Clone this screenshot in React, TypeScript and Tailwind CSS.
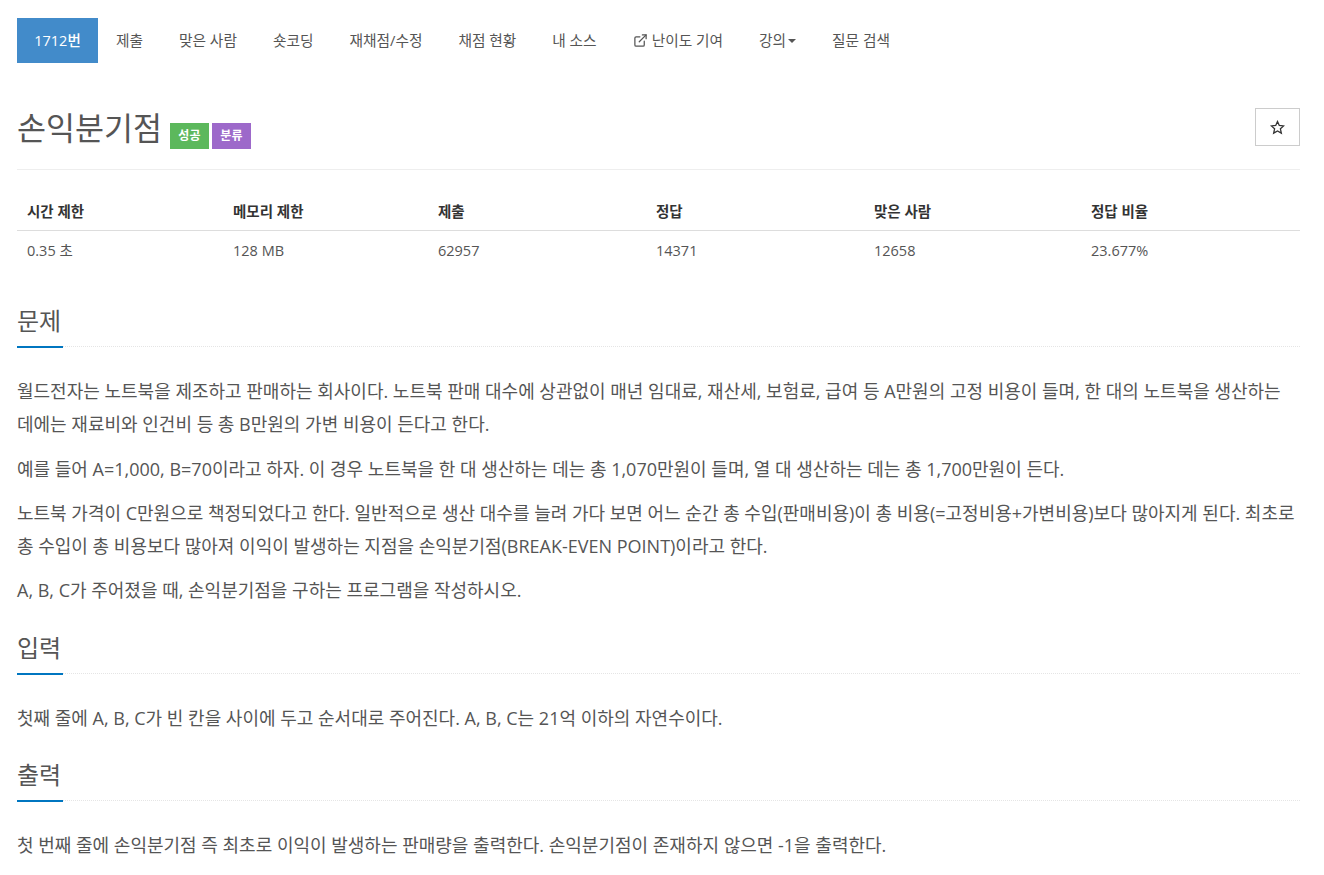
import { ExternalLink } from "lucide-react";

const fontStack = "font-['Open_Sans','Noto_Sans_CJK_KR',sans-serif]";

const navItems = ["제출", "맞은 사람", "숏코딩", "재채점/수정", "채점 현황", "내 소스"];

const stats = [
  { head: "시간 제한", value: "0.35 초", width: "w-[206px]" },
  { head: "메모리 제한", value: "128 MB", width: "w-[205px]" },
  { head: "제출", value: "62957", width: "w-[218px]" },
  { head: "정답", value: "14371", width: "w-[218px]" },
  { head: "맞은 사람", value: "12658", width: "w-[217px]" },
  { head: "정답 비율", value: "23.677%", width: "w-[219px]" },
];

function NavLink({ children }: { children: React.ReactNode }) {
  return <a className="flex h-[45px] items-center px-[18px] text-[14.7px] text-[#555]">{children}</a>;
}

function SectionHead({ title }: { title: string }) {
  return (
    <div className="relative mb-[28px] border-b border-dotted border-[#e5e5e5] pb-[7px]">
      <h2 className="text-[24px] font-normal leading-[36px] text-[#555]">{title}</h2>
      <div className="absolute bottom-[-2px] left-0 h-[2px] w-[46px] bg-[#0076c0]" />
    </div>
  );
}

export default function App() {
  return (
    <div className={`${fontStack} min-h-[875px] overflow-hidden bg-white pl-[17px] pr-[24px] pt-[18px] text-[18px] text-[#555]`}>
      <nav className="flex">
        <a className="flex h-[45px] w-[81px] items-center justify-center bg-[#428bca] text-[14.5px] font-medium text-white">1712번</a>
        {navItems.map((item) => (
          <NavLink key={item}>{item}</NavLink>
        ))}
        <NavLink>
          <ExternalLink className="mr-[4px] h-[15px] w-[15px]" strokeWidth={2} />
          난이도 기여
        </NavLink>
        <NavLink>
          강의
          <span className="ml-[2px] h-0 w-0 border-x-4 border-t-4 border-x-transparent border-t-[#555]" />
        </NavLink>
        <NavLink>질문 검색</NavLink>
      </nav>

      <div className="mt-[45px] flex items-start justify-between border-b border-[#eee] pb-[20px]">
        <div className="flex items-start">
          <h1 className="pt-[1px] text-[31.5px] font-normal leading-[38px] text-[#555]">손익분기점</h1>
          <span className="ml-[8px] mt-[15px] flex h-[26px] w-[39px] items-center justify-center bg-[#5cb85c] text-[12px] font-bold text-white">성공</span>
          <span className="ml-[3px] mt-[15px] flex h-[26px] w-[39px] items-center justify-center bg-[#9d69ca] text-[12px] font-bold text-white">분류</span>
        </div>
        <button className="flex h-[38px] w-[45px] items-center justify-center border border-[#ccc] bg-white">
          <svg className="h-[15px] w-[15px]" viewBox="0 0 16 16" fill="none" stroke="#333" strokeWidth="1.4">
            <polygon points="8,1.6 9.9,5.8 14.6,6.3 11.1,9.4 12.1,14 8,11.7 3.9,14 4.9,9.4 1.4,6.3 6.1,5.8" />
          </svg>
        </button>
      </div>

      <table className="mt-[24px] w-full table-fixed text-[14.5px]">
        <thead>
          <tr className="border-b border-[#ddd]">
            {stats.map((s) => (
              <th key={s.head} className={`${s.width} h-[36px] px-[10px] text-left font-bold text-[#333]`}>{s.head}</th>
            ))}
          </tr>
        </thead>
        <tbody>
          <tr>
            {stats.map((s) => (
              <td key={s.head} className="h-[41px] px-[10px] text-[#555]">{s.value}</td>
            ))}
          </tr>
        </tbody>
      </table>

      <section className="mt-[32px]">
        <SectionHead title="문제" />
        <p className="mb-[11px] leading-[33.3px]">
          월드전자는 노트북을 제조하고 판매하는 회사이다. 노트북 판매 대수에 상관없이 매년 임대료, 재산세, 보험료, 급여 등 A만원의 고정 비용이 들며, 한 대의 노트북을 생산하는 데에는 재료비와 인건비 등 총 B만원의 가변 비용이 든다고 한다.
        </p>
        <p className="mb-[11px] leading-[33.3px]">
          예를 들어 A=1,000, B=70이라고 하자. 이 경우 노트북을 한 대 생산하는 데는 총 1,070만원이 들며, 열 대 생산하는 데는 총 1,700만원이 든다.
        </p>
        <p className="mb-[11px] leading-[33.3px]">
          노트북 가격이 C만원으로 책정되었다고 한다. 일반적으로 생산 대수를 늘려 가다 보면 어느 순간 총 수입(판매비용)이 총 비용(=고정비용+가변비용)보다 많아지게 된다. 최초로 총 수입이 총 비용보다 많아져 이익이 발생하는 지점을 손익분기점(BREAK-EVEN POINT)이라고 한다.
        </p>
        <p className="leading-[33.3px]">A, B, C가 주어졌을 때, 손익분기점을 구하는 프로그램을 작성하시오.</p>
      </section>

      <section className="mt-[22px]">
        <SectionHead title="입력" />
        <p className="leading-[33.3px]">첫째 줄에 A, B, C가 빈 칸을 사이에 두고 순서대로 주어진다. A, B, C는 21억 이하의 자연수이다.</p>
      </section>

      <section className="mt-[22px]">
        <SectionHead title="출력" />
        <p className="leading-[33.3px]">첫 번째 줄에 손익분기점 즉 최초로 이익이 발생하는 판매량을 출력한다. 손익분기점이 존재하지 않으면 -1을 출력한다.</p>
      </section>
    </div>
  );
}
